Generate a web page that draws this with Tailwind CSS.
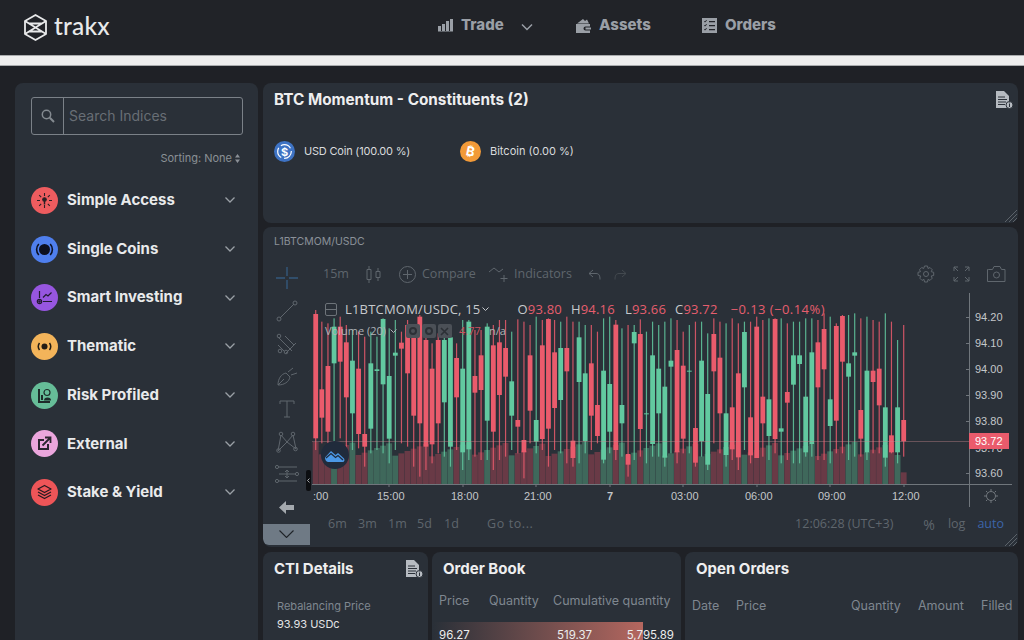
<!DOCTYPE html>
<html lang="en">
<head>
    <meta charset="UTF-8">
    <title>Trakx</title>
    <script src="https://cdn.jsdelivr.net/npm/@tailwindcss/browser@4"></script>
</head>
<body class="bg-[#1f2126] h-[640px] w-[1024px] overflow-hidden font-['Inter',sans-serif]">

    <!-- Top navigation -->
    <header class="h-[55px] bg-[#212328] flex items-center relative">
        <div class="flex items-center ml-[24px] gap-[7px] text-[#e8e9ea]">
            <svg class="w-[23px] h-[27px]" viewBox="0 0 23 27" fill="none" stroke="currentColor" stroke-width="1.8" stroke-linejoin="round">
                <path d="M11.5 1 22 7v13l-10.5 6L1 20V7z"/><path d="M1 7l21 13M22 7L1 20M5 9.500h13M5 17.500h13"/>
            </svg>
            <span class="text-[24.500px] font-['Lato',sans-serif] font-medium leading-none tracking-[0.2px] -mt-[2px]">trakx</span>
        </div>
        <nav class="absolute left-[438px] top-0 h-[50px] flex items-center text-[#9a9fa6] font-extrabold text-[15px]">
            <svg class="w-[15px] h-[13px]" viewBox="0 0 15 13" fill="currentColor"><path d="M0 7h3v5H0zM4 5h3v7H4zM8 2h3v10H8zM12 0h3v12h-3zM0 12.500h15v.5H0z"/></svg>
            <span class="ml-[8px] w-[44px]">Trade</span>
            <svg class="w-[12px] h-[8px] ml-[16px] mt-[3px]" viewBox="0 0 12 8" fill="none" stroke="currentColor" stroke-width="1.500"><path d="M1 1.500l5 5 5-5"/></svg>
            <svg class="w-[15px] h-[15px] ml-[43px]" viewBox="0 0 15 15" fill="currentColor"><path d="M1 5.500 7 1l2 2 2-1.500 2 4zM0 6h14v2.500H9.500a2 2 0 0 0 0 4H14V15H0zM9.500 9.500H15v2H9.500z"/></svg>
            <span class="ml-[8px] w-[53px]">Assets</span>
            <svg class="w-[15px] h-[15px] ml-[50px]" viewBox="0 0 15 15" fill="currentColor"><path fill-rule="evenodd" d="M0 0h15v15H0zM2 3.500l1 1 2-2-.6-.5L3 3.300 2.500 3zM7 3v1.200h6V3zM2 7.500l1 1 2-2-.6-.5L3 7.300l-.5-.3zM7 7v1.200h6V7zM2 11.500l1 1 2-2-.6-.5L3 11.300l-.5-.3zM7 11v1.200h6V11z"/></svg>
            <span class="ml-[8px]">Orders</span>
        </nav>
    </header>
    <div class="h-[11px] bg-[#eeeeee] border-y border-[#a9abad]"></div>

    <main class="flex gap-[5px] pl-[15px] pt-[17px] h-[574px]">

        <!-- Sidebar -->
        <aside class="w-[243px] h-[580px] shrink-0 bg-[#2a3038] rounded-[8px] pt-[14px] px-[16px]">
            <div class="h-[38px] w-[212px] border border-[#7b8188] rounded-[3px] flex items-center">
                <div class="w-[32px] h-full border-r border-[#7b8188] flex items-center justify-center">
                    <svg class="w-[14px] h-[14px]" viewBox="0 0 14 14" fill="none" stroke="#848a90" stroke-width="1.500"><circle cx="5.500" cy="5.500" r="4.200"/><path d="M8.800 8.800 13 13" stroke-width="2"/></svg>
                </div>
                <span class="ml-[5px] text-[14px] leading-[18px] mb-[1px] text-[#686e75]">Search Indices</span>
            </div>
            <div class="mt-[16px] h-[15px] pr-[2px] flex justify-end items-center gap-[3px] text-[11px] text-[#8b9096]">
                <span>Sorting: None</span>
                <svg class="w-[5px] h-[9px]" viewBox="0 0 5 9" fill="currentColor"><path d="M2.500 0 5 3.500H0zM2.500 9 5 5.500H0z"/></svg>
            </div>
            <ul class="mt-[10px] text-[#e9eaeb] font-bold text-[15px]">
                <li class="h-[48.700px] flex items-center">
                    <span class="w-[27px] h-[27px] rounded-full bg-[#ee5c5f] flex items-center justify-center">
                        <svg class="w-[17px] h-[17px]" viewBox="0 0 17 17" fill="none" stroke="#2a2025" stroke-width="1.100"><path d="M8.500 1v3M8.500 13v3M1 8.500h3M13 8.500h3M3.200 3.200l2 2M13.800 3.200l-2 2M3.200 13.800l2-2M13.800 13.800l-2-2"/><circle cx="8.500" cy="7.500" r="1.800" fill="#2a2025"/><path d="M8.500 9v3.500" stroke-width="1.500"/></svg>
                    </span>
                    <span class="ml-[9px] flex-1">Simple Access</span>
                    <svg class="w-[10px] h-[6px] mr-[7px]" viewBox="0 0 10 6" fill="none" stroke="#9aa0a6" stroke-width="1.300"><path d="m.5.500 4.500 4.500L9.500.500"/></svg>
                </li>
                <li class="h-[48.700px] flex items-center">
                    <span class="w-[27px] h-[27px] rounded-full bg-[#4f7fee] flex items-center justify-center">
                        <svg class="w-[19px] h-[19px]" viewBox="0 0 19 19" fill="none" stroke="#0d1020" stroke-width="1.600"><circle cx="9.500" cy="9.500" r="5.500" fill="#0d1020" stroke="none"/><path d="M3.800 4A8 8 0 0 0 3.800 15M15.200 4a8 8 0 0 1 0 11"/></svg>
                    </span>
                    <span class="ml-[9px] flex-1">Single Coins</span>
                    <svg class="w-[10px] h-[6px] mr-[7px]" viewBox="0 0 10 6" fill="none" stroke="#9aa0a6" stroke-width="1.300"><path d="m.5.500 4.500 4.500L9.500.500"/></svg>
                </li>
                <li class="h-[48.700px] flex items-center">
                    <span class="w-[27px] h-[27px] rounded-full bg-[#9756e0] flex items-center justify-center">
                        <svg class="w-[17px] h-[17px]" viewBox="0 0 17 17" fill="none" stroke="#221a30" stroke-width="1.200"><circle cx="3.500" cy="12.500" r="2.200"/><circle cx="3.500" cy="12.500" r=".7" fill="#221a30"/><path d="M3.500 2v7M7 12.500h9M7 8.500l3-3 2 1.500 3.500-3.500"/></svg>
                    </span>
                    <span class="ml-[9px] flex-1">Smart Investing</span>
                    <svg class="w-[10px] h-[6px] mr-[7px]" viewBox="0 0 10 6" fill="none" stroke="#9aa0a6" stroke-width="1.300"><path d="m.5.500 4.500 4.500L9.500.500"/></svg>
                </li>
                <li class="h-[48.700px] flex items-center">
                    <span class="w-[27px] h-[27px] rounded-full bg-[#f3b45a] flex items-center justify-center">
                        <svg class="w-[17px] h-[11px]" viewBox="0 0 17 11" fill="none" stroke="#231c14" stroke-width="1.500"><circle cx="8.500" cy="5.500" r="3" fill="#231c14" stroke="none"/><path d="M3.500 2a6 6 0 0 0 0 7M13.500 2a6 6 0 0 1 0 7"/></svg>
                    </span>
                    <span class="ml-[9px] flex-1">Thematic</span>
                    <svg class="w-[10px] h-[6px] mr-[7px]" viewBox="0 0 10 6" fill="none" stroke="#9aa0a6" stroke-width="1.300"><path d="m.5.500 4.500 4.500L9.500.500"/></svg>
                </li>
                <li class="h-[48.700px] flex items-center">
                    <span class="w-[27px] h-[27px] rounded-full bg-[#66bd98] flex items-center justify-center">
                        <svg class="w-[17px] h-[17px]" viewBox="0 0 17 17" fill="#1e2c2a" stroke="none"><path d="M2 2h2v12h10v2H2zM5 8h2v5H5z"/><path d="M8 13.500a3.500 3 0 0 1 7 0z"/><circle cx="11" cy="5.500" r="3" fill="none" stroke="#1e2c2a" stroke-width="1.200"/></svg>
                    </span>
                    <span class="ml-[9px] flex-1">Risk Profiled</span>
                    <svg class="w-[10px] h-[6px] mr-[7px]" viewBox="0 0 10 6" fill="none" stroke="#9aa0a6" stroke-width="1.300"><path d="m.5.500 4.500 4.500L9.500.500"/></svg>
                </li>
                <li class="h-[48.700px] flex items-center">
                    <span class="w-[27px] h-[27px] rounded-full bg-[#eba6dd] flex items-center justify-center">
                        <svg class="w-[15px] h-[15px]" viewBox="0 0 15 15"><path fill="#2b2530" d="M1 3h6v2H3v7h7V8h2v6H1z"/><path fill="none" stroke="#2b2530" stroke-width="1.800" d="M5.500 9.500 13 2M8 1.500h5.500V7"/></svg>
                    </span>
                    <span class="ml-[9px] flex-1">External</span>
                    <svg class="w-[10px] h-[6px] mr-[7px]" viewBox="0 0 10 6" fill="none" stroke="#9aa0a6" stroke-width="1.300"><path d="m.5.500 4.500 4.500L9.500.500"/></svg>
                </li>
                <li class="h-[48.700px] flex items-center">
                    <span class="w-[27px] h-[27px] rounded-full bg-[#ee5558] flex items-center justify-center">
                        <svg class="w-[17px] h-[17px]" viewBox="0 0 17 17" fill="none" stroke="#261a20" stroke-width="1.300" stroke-linejoin="round"><path d="M8.500 1.500 15 5l-6.500 3.500L2 5z"/><path d="m2 8 6.500 3.500L15 8M2 11l6.500 3.500L15 11"/></svg>
                    </span>
                    <span class="ml-[9px] flex-1">Stake &amp; Yield</span>
                    <svg class="w-[10px] h-[6px] mr-[7px]" viewBox="0 0 10 6" fill="none" stroke="#9aa0a6" stroke-width="1.300"><path d="m.5.500 4.500 4.500L9.500.500"/></svg>
                </li>
            </ul>
        </aside>

        <div class="w-[755px] shrink-0 flex flex-col gap-[4px]">

            <!-- Constituents -->
            <section class="h-[140px] shrink-0 bg-[#2a3038] rounded-[8px] relative">
                <div class="flex items-start justify-between pl-[11px] pr-[5px] pt-[7px]">
                    <h2 class="text-[15.300px] font-bold text-[#eeeeef] leading-[20px]">BTC Momentum - Constituents (2)</h2>
                    <svg class="w-[18px] h-[18px] mt-[1px]" viewBox="0 0 18 18"><path fill="#b6bbc1" d="M1 0h8l5 5v12H1z"/><path stroke="#2a3038" stroke-width="1" d="M3 6h7M3 8.500h9M3 11h8M3 13.500h7"/><circle cx="14.500" cy="14" r="3.500" fill="#b6bbc1" stroke="#2a3038"/><path stroke="#2a3038" d="M14.500 13v3M14.500 11.500v1"/></svg>
                </div>
                <div class="flex items-center mt-[31px] pl-[11px] text-[11px] text-[#d9dbdd]">
                    <svg class="w-[21px] h-[21px]" viewBox="0 0 21 21" fill="none"><circle cx="10.500" cy="10.500" r="10.500" fill="#3e73c4"/><circle cx="10.500" cy="10.500" r="6.800" stroke="#fff" stroke-width="1.200" stroke-dasharray="11 3"/><text x="10.500" y="14.500" text-anchor="middle" fill="#fff" font-size="11" font-weight="700" font-family="Inter">$</text></svg>
                    <span class="ml-[9px] w-[156px] tracking-[-0.2px]">USD Coin (100.00 %)</span>
                    <svg class="w-[21px] h-[21px]" viewBox="0 0 21 21"><circle cx="10.500" cy="10.500" r="10.500" fill="#f29a38"/><text x="10.500" y="15" text-anchor="middle" fill="#fff" font-size="13" font-weight="700" font-family="Inter" transform="rotate(12 10.500 10.500)">₿</text></svg>
                    <span class="ml-[9px]">Bitcoin (0.00 %)</span>
                </div>
                <svg class="absolute right-[1px] bottom-[1px] w-[13px] h-[13px]" viewBox="0 0 13 13" stroke="#5c636a"><path d="M13 1 1 13M13 5l-8 8M13 9l-4 4"/></svg>
            </section>

            <!-- Chart -->
            <section class="h-[320px] shrink-0 bg-[#2a3038] rounded-[8px] relative overflow-hidden">
                <div class="h-[35px] pl-[11px] pt-[8px] text-[10.500px] text-[#8b9199] leading-[14px]">L1BTCMOM/USDC</div>
                <div class="flex font-['Open_Sans',sans-serif]">
                    <!-- drawing tools -->
                    <div class="w-[47px] shrink-0 text-[#5f666d]">
                        <div class="h-[32.700px] flex items-center justify-center">
                            <svg class="w-[22px] h-[22px]" viewBox="0 0 22 22" stroke="#34587c" stroke-width="1.400"><path d="M11 0v9M11 13v9M0 11h9M13 11h9"/></svg>
                        </div>
                        <div class="h-[32.700px] flex items-center justify-center">
                            <svg class="w-[22px] h-[22px]" viewBox="0 0 22 22" fill="none" stroke="currentColor"><path d="M4 18 18 4"/><circle cx="3" cy="19" r="2"/><circle cx="19" cy="3" r="2"/></svg>
                        </div>
                        <div class="h-[32.700px] flex items-center justify-center">
                            <svg class="w-[22px] h-[22px]" viewBox="0 0 22 22" fill="none" stroke="currentColor"><path d="m2 4 14 14M9 3l9 9M2 12l6 6M10 20l10-10"/><circle cx="4" cy="18" r="1.800"/><circle cx="10" cy="19" r="1.800"/><circle cx="3" cy="3" r="1.800"/></svg>
                        </div>
                        <div class="h-[32.700px] flex items-center justify-center">
                            <svg class="w-[22px] h-[22px]" viewBox="0 0 22 22" fill="none" stroke="currentColor"><path d="M2 20c0-6 3-11 8-12l4 4c-1 5-6 8-12 8zM2 20l6-6M12 7l5-4M15 10l6-2"/></svg>
                        </div>
                        <div class="h-[32.700px] flex items-center justify-center">
                            <svg class="w-[20px] h-[20px]" viewBox="0 0 20 20" fill="none" stroke="currentColor"><path d="M3 5V2h14v3M10 2v16M7 18h6"/></svg>
                        </div>
                        <div class="h-[32.700px] flex items-center justify-center">
                            <svg class="w-[22px] h-[22px]" viewBox="0 0 22 22" fill="none" stroke="currentColor"><path d="m2 20 3-16 6 7 6-7 3 14-9-7z"/><circle cx="5" cy="3" r="1.800"/><circle cx="17" cy="3" r="1.800"/><circle cx="2.500" cy="19.500" r="1.800"/><circle cx="19.500" cy="18" r="1.800"/></svg>
                        </div>
                        <div class="h-[32.700px] flex items-center justify-center">
                            <svg class="w-[24px] h-[20px]" viewBox="0 0 24 20" fill="none" stroke="currentColor"><path d="M4 3h18M4 10h16M4 17h18M12 6v8M10 8l2-2 2 2M10 12l2 2 2-2"/><circle cx="2" cy="3" r="1.600"/><circle cx="22" cy="10" r="1.600"/><circle cx="2" cy="17" r="1.600"/></svg>
                        </div>
                        <div class="h-[32.700px] flex items-center justify-center">
                            <svg class="w-[15px] h-[13px]" viewBox="0 0 15 13" fill="#a4a9ae"><path d="M7 0v4h8v5H7v4L0 6.500z"/></svg>
                        </div>
                        <div class="h-[21px] bg-[#6f7a85] rounded-bl-[6px] flex items-center justify-center">
                            <svg class="w-[15px] h-[8px]" viewBox="0 0 15 8" fill="none" stroke="#1f2328" stroke-width="1.100"><path d="m.5.500 7 7 7-7"/></svg>
                        </div>
                    </div>
                    <div class="flex-1 min-w-0">
                        <!-- chart toolbar -->
                        <div class="h-[31px] flex items-center text-[12.500px] text-[#5f666d] pb-[7px]">
                            <span class="ml-[13px] w-[34px]">15m</span>
                            <svg class="w-[15px] h-[17px] ml-[9px]" viewBox="0 0 15 17" fill="none" stroke="currentColor"><path d="M1 3.500h4v10H1zM10 5.500h4v6h-4zM3 0v3.500M3 13.500V17M12 2v3.500M12 11.500V15"/></svg>
                            <svg class="w-[17px] h-[17px] ml-[18px]" viewBox="0 0 17 17" fill="none" stroke="currentColor"><circle cx="8.500" cy="8.500" r="8"/><path d="M8.500 4v9M4 8.500h9"/></svg>
                            <span class="ml-[6px] w-[67px]">Compare</span>
                            <svg class="w-[20px] h-[16px]" viewBox="0 0 20 16" fill="none" stroke="currentColor"><path d="M0 6l5-4 5 4 4-3M15 9v7M11.500 12.500h7"/></svg>
                            <span class="ml-[5px] w-[74px]">Indicators</span>
                            <svg class="w-[13px] h-[11px]" viewBox="0 0 13 11" fill="none" stroke="currentColor"><path d="M5 1 1 4.500 5 8M1 4.500h7c3 0 4 2 4 6"/></svg>
                            <svg class="w-[13px] h-[11px] ml-[13px]" viewBox="0 0 13 11" fill="none" stroke="#43494f"><path d="m8 1 4 3.500L8 8M12 4.500H5c-3 0-4 2-4 6"/></svg>
                            <svg class="w-[18px] h-[18px] ml-auto" viewBox="0 0 18 18" fill="none" stroke="currentColor"><circle cx="9" cy="9" r="2.500"/><path d="M7.500 1h3l.5 2.500 2-1 2.200 2.200-1 2 2.500.6v3.200l-2.500.5 1 2.200-2.200 2.200-2-1-.5 2.600h-3l-.5-2.600-2 1-2.200-2.200 1-2.200L1 10.500V7.300l2.500-.6-1-2 2.200-2.200 2 1z"/></svg>
                            <svg class="w-[17px] h-[16px] ml-[18px]" viewBox="0 0 17 16" fill="none" stroke="currentColor"><path d="M1 5V1h4M1 1l4 4M16 5V1h-4M16 1l-4 4M1 11v4h4M1 15l4-4M16 11v4h-4M16 15l-4-4"/></svg>
                            <svg class="w-[19px] h-[16px] ml-[17px] mr-[12px]" viewBox="0 0 19 16" fill="none" stroke="currentColor"><path d="M1.500 3.500h4L7 .5h6l1.500 3h3.500v12H.5v-12z"/><circle cx="9.500" cy="9" r="3"/></svg>
                        </div>
                        <!-- chart canvas -->
                        <div class="h-[214px] relative">
                            <svg id="chart" class="absolute inset-0" width="708" height="214" viewBox="0 0 708 214" font-family="Liberation Sans, sans-serif" font-size="11" fill="#c4c7ca">
                                <g id="volumes"></g>
                                <g id="candles"></g>
                                <path d="M2 148.500H659" stroke="#c98a8f" stroke-opacity=".4"/>
                                <path d="M2 191.500H702M659.500 0V214" stroke="#70767c"/>
                                <path d="M656 24.500h3M656 50.500h3M656 76.500h3M656 102.500h3M656 128.500h3M656 180.500h3M79 191v3M153 191v3M226 191v3M300 191v3M373 191v3M447 191v3M520 191v3M594 191v3" stroke="#70767c"/>
                                <text x="665" y="28">94.20</text>
                                <text x="665" y="54">94.10</text>
                                <text x="665" y="80">94.00</text>
                                <text x="665" y="106">93.90</text>
                                <text x="665" y="132">93.80</text>
                                <text x="665" y="184">93.60</text>
                                <text x="665" y="159">93.70</text>
                                <rect x="659" y="140" width="40" height="16" fill="#ea5b6c"/>
                                <text x="665" y="152" fill="#fff">93.72</text>
                                <text x="3" y="207">:00</text>
                                <text x="67" y="207">15:00</text>
                                <text x="141" y="207">18:00</text>
                                <text x="214" y="207">21:00</text>
                                <text x="297" y="207" font-weight="700">7</text>
                                <text x="361" y="207">03:00</text>
                                <text x="435" y="207">06:00</text>
                                <text x="508" y="207">09:00</text>
                                <text x="582" y="207">12:00</text>
                                <g fill="none" stroke="#70767c"><circle cx="681" cy="203" r="4.500"/><path d="M681 196v2M681 208v2M674 203h2M686 203h2M676 198l1.500 1.500M686 198l-1.500 1.500M676 208l1.500-1.500M686 208l-1.500-1.500"/></g>
                            </svg>

                            <!-- legend over the candles -->
                            <div class="absolute left-[15px] top-[7px] flex items-center text-[13px] leading-[18px] text-[#c6c9cc] tracking-[0.2px]">
                                <span class="w-[12px] h-[13px] border border-[#6d7379] rounded-[2px] mr-[8px] flex items-center"><span class="w-full h-px bg-[#6d7379]"></span></span>
                                <span>L1BTCMOM/USDC, 15</span>
                                <svg class="w-[7px] h-[5px] ml-[2px] mr-[28px]" viewBox="0 0 7 5" fill="none" stroke="currentColor"><path d="m.5.500 3 3 3-3"/></svg>
                                <span>O<span class="text-[#e65e6e]">93.80</span></span>
                                <span class="ml-[9px]">H<span class="text-[#e65e6e]">94.16</span></span>
                                <span class="ml-[10px]">L<span class="text-[#e65e6e]">93.66</span></span>
                                <span class="ml-[9px]">C<span class="text-[#e65e6e]">93.72</span></span>
                                <span class="ml-[13px] text-[#e65e6e] tracking-[0.45px]">−0.13 (−0.14%)</span>
                            </div>
                            <div class="absolute left-[15px] top-[30px] flex items-center text-[11px] leading-[16px] text-[#aeb2b6]">
                                <span>Volume (20)</span>
                                <svg class="w-[7px] h-[5px] ml-[4px] mr-[9px]" viewBox="0 0 7 5" fill="none" stroke="currentColor"><path d="m.5.500 3 3 3-3"/></svg>
                                <span class="w-[14px] h-[14px] bg-[#4b5057] rounded-[2px] flex items-center justify-center"><span class="w-[8px] h-[8px] rounded-full border-2 border-[#2c3036]"></span></span>
                                <span class="w-[14px] h-[14px] ml-[2px] bg-[#4b5057] rounded-[2px] flex items-center justify-center"><span class="w-[8px] h-[8px] rounded-full border-2 border-[#2c3036]"></span></span>
                                <span class="w-[14px] h-[14px] ml-[2px] bg-[#4b5057] rounded-[2px] flex items-center justify-center">
                                    <svg class="w-[9px] h-[9px]" viewBox="0 0 9 9" stroke="#2c3036" stroke-width="1.600"><path d="m1 1 7 7M8 1 1 8"/></svg>
                                </span>
                                <span class="ml-[7px] text-[#c9525f] w-[30px]">4.77</span>
                                <span>n/a</span>
                            </div>
                            <div class="absolute left-[11px] top-[148px] w-[28px] h-[28px] rounded-full bg-[#202b3b] flex items-center justify-center">
                                <svg class="w-[20px] h-[13px]" viewBox="0 0 20 13"><path fill="#4b98e6" d="M0 8.500 6 2l4.500 4L13 4l6 5.500c1 1.500.5 3.500-1.500 3.500H3C1 13 0 10.500 0 8.500z"/><path fill="none" stroke="#202b3b" stroke-width="1.300" d="M1 9l5-4.500 4.500 4L13 6.500l5 4.500"/></svg>
                            </div>
                            <div class="absolute -left-[4px] top-[177px] w-[5px] h-[21px] bg-[#0c0e11] rounded-[2px] flex items-center justify-center">
                                <svg class="w-[3px] h-[5px]" viewBox="0 0 3 5" fill="none" stroke="#cfd2d5" stroke-width=".8"><path d="M2.500.5.500 2.500l2 2"/></svg>
                            </div>
                        </div>
                        <!-- chart footer -->
                        <div class="h-[40px] flex items-center text-[12.500px] text-[#5f666d] pb-[6px]">
                            <span class="ml-[18px] w-[30px]">6m</span>
                            <span class="w-[30px]">3m</span>
                            <span class="w-[29px]">1m</span>
                            <span class="w-[27px]">5d</span>
                            <span class="w-[43px]">1d</span>
                            <span class="tracking-[0.6px]">Go to...</span>
                            <span class="ml-auto">12:06:28 (UTC+3)</span>
                            <span class="ml-[30px] text-[14px]">%</span>
                            <span class="ml-[13px]">log</span>
                            <span class="ml-[12px] mr-[14px] text-[#3c64a8]">auto</span>
                        </div>
                    </div>
                </div>
                <svg class="absolute right-[1px] bottom-[1px] w-[13px] h-[13px]" viewBox="0 0 13 13" stroke="#5c636a"><path d="M13 1 1 13M13 5l-8 8M13 9l-4 4"/></svg>
            </section>

            <div class="h-[100px] shrink-0 flex gap-[4px] mt-[1px]">
                <!-- CTI details -->
                <section class="w-[165px] h-[100px] bg-[#2a3038] rounded-[8px] pl-[11px] pr-[5px] pt-[7px]">
                    <div class="flex items-start justify-between">
                        <h3 class="text-[15px] font-bold text-[#eeeeef] leading-[20px]">CTI Details</h3>
                        <svg class="w-[18px] h-[18px] mt-[1px]" viewBox="0 0 18 18"><path fill="#b6bbc1" d="M1 0h8l5 5v12H1z"/><path stroke="#2a3038" d="M3 6h7M3 8.500h9M3 11h8M3 13.500h7"/><circle cx="14.500" cy="14" r="3.500" fill="#b6bbc1" stroke="#2a3038"/><path stroke="#2a3038" d="M14.500 13v3M14.500 11.500v1"/></svg>
                    </div>
                    <p class="mt-[20px] ml-[3px] text-[11px] leading-[14px] text-[#7f8790]">Rebalancing Price</p>
                    <p class="mt-[4px] ml-[3px] text-[11px] leading-[14px] text-[#e3e4e6]">93.93 USDc</p>
                </section>
                <!-- Order book -->
                <section class="w-[249px] h-[100px] bg-[#2a3038] rounded-[8px] pt-[7px]">
                    <h3 class="ml-[11px] text-[15px] font-bold text-[#eeeeef] leading-[20px]">Order Book</h3>
                    <div class="mt-[14px] pl-[7px] flex text-[12.500px] leading-[16px] text-[#7f8790]">
                        <span class="w-[50px]">Price</span>
                        <span class="w-[64px]">Quantity</span>
                        <span>Cumulative quantity</span>
                    </div>
                    <div class="mt-[13px] h-[22px] relative">
                        <div class="absolute left-[1px] top-0 bottom-0 w-[210px] bg-gradient-to-r from-[#2a3038] to-[#b5675f]"></div>
                        <div class="relative px-[7px] pt-[5px] flex text-[11.500px] leading-[16px] text-[#eceded]">
                            <span class="w-[118px]">96.27</span>
                            <span class="flex-1">519.37</span>
                            <span>5,795.89</span>
                        </div>
                    </div>
                </section>
                <!-- Open orders -->
                <section class="w-[333px] h-[100px] bg-[#2a3038] rounded-[8px] pt-[7px]">
                    <h3 class="ml-[11px] text-[15px] font-bold text-[#eeeeef] leading-[20px]">Open Orders</h3>
                    <div class="mt-[19px] pl-[7px] grid grid-cols-[44px_115px_67px_63px_1fr] text-[12.500px] leading-[16px] text-[#7f8790]">
                        <span>Date</span>
                        <span>Price</span>
                        <span>Quantity</span>
                        <span>Amount</span>
                        <span>Filled</span>
                    </div>
                </section>
            </div>
        </div>
    </main>

    <script>
        // color, body top, body bottom, wick top, wick bottom (y measured at 3x from y=310)
        const CANDLES = `r 12 385 0 420|r 238 323 35 400|r 168 365 40 400|g 50 160 25 400|r 50 155 20 385|r 97 262 45 430|g 152 310 60 420|r 176 372 65 415|r 372 410 80 470|g 160 356 65 430|g 178 183 80 420|g 27 223 25 430|g 198 386 55 460|g 128 137 30 420|r 98 116 65 400|r 45 190 30 410|r 70 317 50 470|r 20 340 15 500|r 90 410 60 480|r 176 403 100 460|r 90 340 70 430|g 90 277 60 440|g 82 410 50 470|r 144 262 100 420|g 176 427 30 480|g 35 418 30 450|r 198 248 60 440|r 136 240 60 450|g 50 332 40 450|r 106 365 45 480|r 97 255 30 450|r 114 200 30 440|g 214 317 65 420|r 330 350 28 430|r 390 427 35 505|r 136 302 45 400|g 330 395 20 430|r 106 387 30 420|r 27 356 25 470|r 127 294 30 420|g 114 270 35 430|r 114 184 20 460|r 392 444 35 470|g 82 216 35 460|g 190 394 45 430|r 160 317 45 420|r 285 378 65 400|g 182 449 25 460|g 222 365 20 430|r 44 420 30 450|g 285 340 55 440|r 432 464 45 500|g 66 100 45 450|r 72 357 28 440|g 310 312 65 460|g 136 402 35 440|g 176 310 45 440|g 230 443 35 470|g 152 170 25 430|r 120 427 30 460|r 167 386 65 430|g 182 184 45 430|r 354 458 35 470|g 152 394 35 440|g 252 464 70 480|r 72 184 25 400|r 143 310 35 430|g 310 435 40 470|r 292 418 25 450|r 190 442 40 480|g 66 232 35 420|r 322 436 35 460|r 50 444 20 430|r 260 340 30 440|g 268 378 25 450|r 27 387 25 430|g 355 365 25 460|r 246 278 40 450|g 136 224 35 460|g 136 162 35 460|g 260 427 25 440|g 127 402 25 440|r 97 232 30 450|r 57 178 10 450|g 268 348 20 460|r 48 332 40 430|r 18 155 15 430|g 160 200 15 450|g 127 137 10 440|r 300 386 25 440|g 182 427 20 450|r 182 216 30 430|r 176 286 35 430|g 292 443 10 470|r 376 427 35 430|g 292 427 90 460|r 330 394 45 440`.split('|');
        const NS = 'http://www.w3.org/2000/svg';
        const rect = (parent, x, y, w, h, fill, opacity) => {
            const el = document.createElementNS(NS, 'rect');
            el.setAttribute('x', x); el.setAttribute('y', y);
            el.setAttribute('width', w); el.setAttribute('height', h);
            el.setAttribute('fill', fill);
            if (opacity) el.setAttribute('fill-opacity', opacity);
            parent.appendChild(el);
        };
        const toY = v => 17 + v / 3;
        const volumes = document.getElementById('volumes');
        const candles = document.getElementById('candles');
        CANDLES.forEach((c, i) => {
            const [col, top, bot, wt, wb] = c.split(' ');
            const x = 5.7 + i * 6.125;
            const body = col === 'r' ? '#ea5b6c' : '#62c9a0';
            const volTop = i === 96 ? 487 : 396 + (i * 37) % 44;
            rect(volumes, x - 3, toY(volTop), 5.9, toY(522) - toY(volTop), col === 'r' ? '#693a46' : '#3f685b');
            rect(candles, x - 0.6, toY(+wt), 1.2, (wb - wt) / 3, body, 0.85);
            rect(candles, x - 2.4, toY(+top), 4.8, Math.max(bot - top, 3) / 3, body);
        });
    </script>
</body>
</html>
